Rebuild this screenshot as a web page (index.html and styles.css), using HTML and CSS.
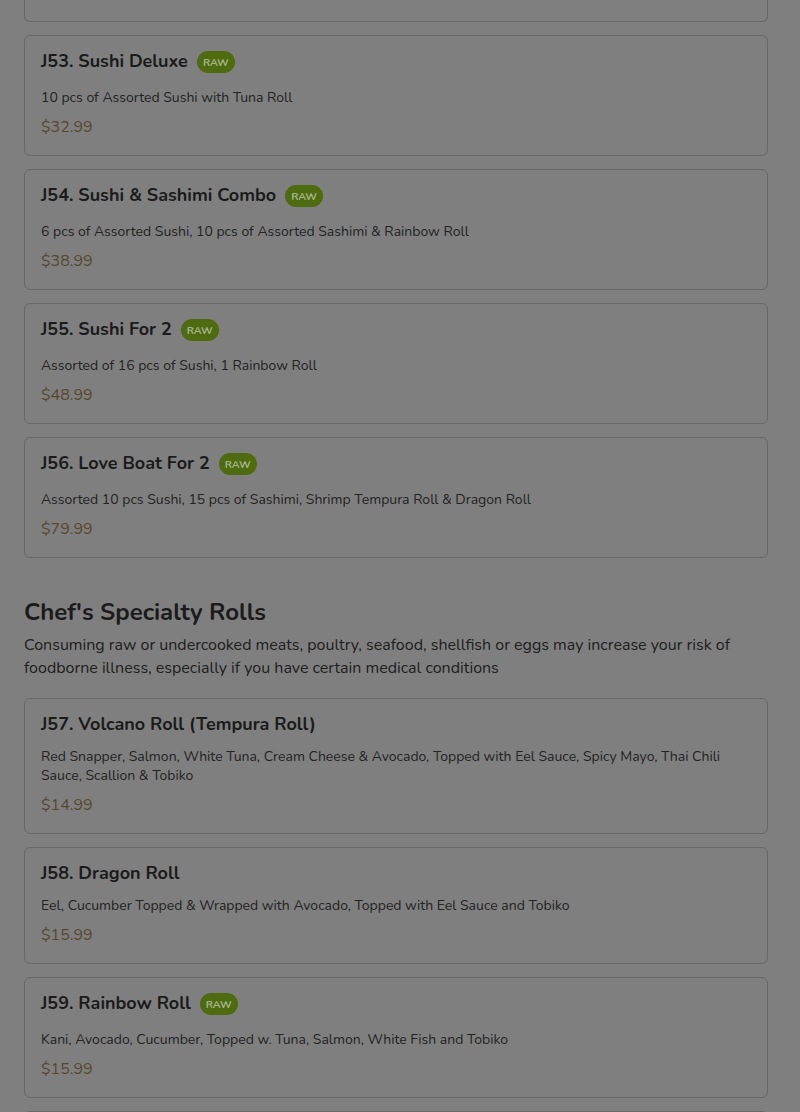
FILE: index.html
```html
<!DOCTYPE html>
<html lang="en">
<head>
<meta charset="utf-8">
<title>Menu</title>
<link rel="stylesheet" href="styles.css">
</head>
<body>
<main class="menu">
  <section class="group">
    <div class="card card-cut"></div>

    <article class="card">
      <div class="title-row with-badge">
        <h3 class="item-name">J53. Sushi Deluxe</h3>
        <span class="badge">RAW</span>
      </div>
      <p class="desc">10 pcs of Assorted Sushi with Tuna Roll</p>
      <p class="price">$32.99</p>
    </article>

    <article class="card">
      <div class="title-row with-badge">
        <h3 class="item-name">J54. Sushi &amp; Sashimi Combo</h3>
        <span class="badge">RAW</span>
      </div>
      <p class="desc">6 pcs of Assorted Sushi, 10 pcs of Assorted Sashimi &amp; Rainbow Roll</p>
      <p class="price">$38.99</p>
    </article>

    <article class="card">
      <div class="title-row with-badge">
        <h3 class="item-name">J55. Sushi For 2</h3>
        <span class="badge">RAW</span>
      </div>
      <p class="desc">Assorted of 16 pcs of Sushi, 1 Rainbow Roll</p>
      <p class="price">$48.99</p>
    </article>

    <article class="card">
      <div class="title-row with-badge">
        <h3 class="item-name">J56. Love Boat For 2</h3>
        <span class="badge">RAW</span>
      </div>
      <p class="desc">Assorted 10 pcs Sushi, 15 pcs of Sashimi, Shrimp Tempura Roll &amp; Dragon Roll</p>
      <p class="price">$79.99</p>
    </article>
  </section>

  <section class="group">
    <h2 class="group-title">Chef's Specialty Rolls</h2>
    <p class="group-note">Consuming raw or undercooked meats, poultry, seafood, shellfish or eggs may increase your risk of foodborne illness, especially if you have certain medical conditions</p>

    <article class="card">
      <div class="title-row">
        <h3 class="item-name">J57. Volcano Roll (Tempura Roll)</h3>
      </div>
      <p class="desc">Red Snapper, Salmon, White Tuna, Cream Cheese &amp; Avocado, Topped with Eel Sauce, Spicy Mayo, Thai Chili Sauce, Scallion &amp; Tobiko</p>
      <p class="price">$14.99</p>
    </article>

    <article class="card">
      <div class="title-row">
        <h3 class="item-name">J58. Dragon Roll</h3>
      </div>
      <p class="desc">Eel, Cucumber Topped &amp; Wrapped with Avocado, Topped with Eel Sauce and Tobiko</p>
      <p class="price">$15.99</p>
    </article>

    <article class="card">
      <div class="title-row with-badge">
        <h3 class="item-name">J59. Rainbow Roll</h3>
        <span class="badge">RAW</span>
      </div>
      <p class="desc">Kani, Avocado, Cucumber, Topped w. Tuna, Salmon, White Fish and Tobiko</p>
      <p class="price">$15.99</p>
    </article>

    <div class="card card-next"></div>
  </section>
</main>
</body>
</html>
```

FILE: styles.css
```css
* {
  box-sizing: border-box;
}

html, body {
  margin: 0;
  padding: 0;
  background: #7f7f7f;
}

body {
  font-family: "Nunito", Lato, "Noto Sans", sans-serif;
  color: #1c1c1c;
  overflow: hidden;
  height: 1112px;
}

.menu {
  padding: 0 32px 0 24px;
}

.group {
  display: flex;
  flex-direction: column;
  gap: 13px;
}

.card {
  border: 1px solid #686868;
  border-radius: 6px;
  background: #7f7f7f;
  padding: 13px 16px 17px;
}

.card-cut {
  height: 22px;
  border-top: none;
  border-top-left-radius: 0;
  border-top-right-radius: 0;
  padding: 0;
}

.card-next {
  height: 40px;
  border-bottom: none;
  border-bottom-left-radius: 0;
  border-bottom-right-radius: 0;
  padding: 0;
}

.title-row {
  display: flex;
  align-items: center;
  gap: 9px;
  height: 24px;
}

.title-row.with-badge {
  box-sizing: content-box;
  padding-bottom: 4px;
  align-items: flex-start;
}

.item-name {
  margin: 0;
  font-size: 18px;
  line-height: 24px;
  font-weight: 700;
  color: #1b1b1b;
}

.badge {
  display: inline-flex;
  align-items: center;
  height: 22px;
  margin-top: 2px;
  padding: 0 6px;
  border-radius: 11px;
  background: #4e6b10;
  color: #a3b58a;
  font-size: 10.5px;
  font-weight: 700;
  letter-spacing: 0;
}

.desc {
  margin: 11px 0 0;
  font-size: 14px;
  line-height: 19px;
  color: #232323;
}

.price {
  margin: 9px 0 0;
  font-size: 16px;
  line-height: 22px;
  color: #58472f;
}

.group-title {
  margin: 38px 0 0;
  font-size: 24px;
  line-height: 32px;
  font-weight: 700;
  color: #1b1b1b;
}

.group-note {
  margin: -7px 0 5px;
  font-size: 16px;
  line-height: 23px;
  color: #202020;
}
```
